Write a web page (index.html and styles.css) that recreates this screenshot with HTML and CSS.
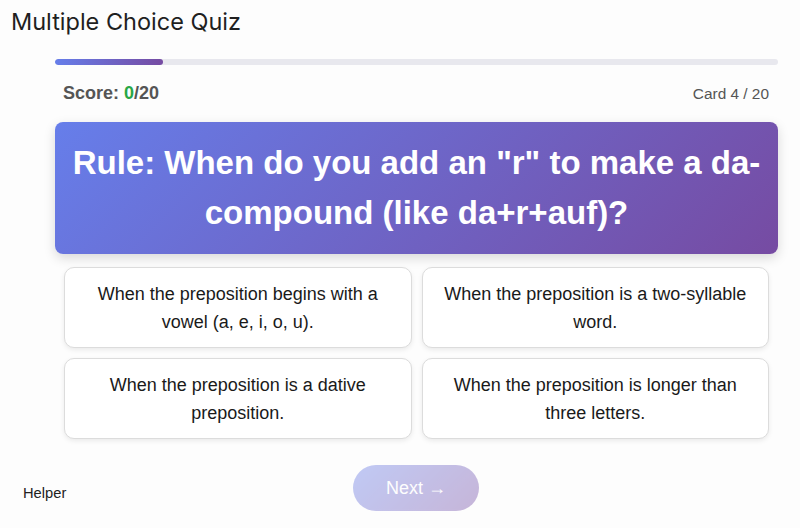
FILE: index.html
```html
<!DOCTYPE html>
<html>
<head>
<meta charset="utf-8">
<link rel="stylesheet" href="styles.css">
</head>
<body>
<h1 class="title">Multiple Choice Quiz</h1>
<main class="quiz">
  <div class="progress"><div class="progress-fill" style="width:15%"></div></div>
  <div class="stats">
    <span class="score">Score: <span class="score-num">0</span>/20</span>
    <span class="card-count">Card 4 / 20</span>
  </div>
  <div class="question">Rule: When do you add an "r" to make a da-compound (like da+r+auf)?</div>
  <div class="options">
    <button class="option">When the preposition begins with a vowel (a, e, i, o, u).</button>
    <button class="option">When the preposition is a two-syllable word.</button>
    <button class="option">When the preposition is a dative preposition.</button>
    <button class="option">When the preposition is longer than three letters.</button>
  </div>
</main>
<footer class="footer">
  <span class="helper">Helper</span>
  <button class="next" disabled>Next →</button>
</footer>
</body>
</html>
```

FILE: styles.css
```css
* { box-sizing: border-box; }
html, body { margin: 0; padding: 0; }
body {
  background: #fdfdfd;
  font-family: "Liberation Sans", Arial, sans-serif;
  color: #222;
  width: 800px;
  height: 528px;
  overflow: hidden;
}
.title {
  margin: 0;
  padding: 7px 0 0 11px;
  height: 44px;
  font-family: Inter, "Open Sans", sans-serif;
  font-weight: 400;
  font-size: 23.5px;
  line-height: 30px;
  color: #1f1f1f;
}
.quiz {
  margin-left: 55px;
  width: 723px;
  padding-top: 15px;
}
.progress {
  height: 6px;
  background: #e8e8ee;
  border-radius: 3px;
  overflow: hidden;
}
.progress-fill {
  height: 100%;
  background: linear-gradient(90deg, #667eea, #764ba2);
  border-radius: 3px;
}
.stats {
  display: flex;
  justify-content: space-between;
  align-items: center;
  padding: 0 9px 0 8px;
  height: 57px;
  color: #555;
}
.score { font-weight: bold; font-size: 18px; }
.score-num { color: #28a745; }
.card-count { font-size: 15.4px; }
.question {
  height: 132px;
  border-radius: 8px;
  background: linear-gradient(135deg, #667eea 0%, #764ba2 100%);
  box-shadow: 0 4px 12px rgba(0,0,0,0.15);
  color: #fff;
  font-weight: bold;
  font-size: 33px;
  line-height: 50px;
  text-align: center;
  display: flex;
  align-items: center;
  justify-content: center;
  padding: 0 12px;
}
.options {
  display: grid;
  grid-template-columns: 1fr 1fr;
  gap: 10px 10px;
  padding: 13px 9px 0 9px;
}
.option {
  height: 81px;
  background: #fff;
  border: 1px solid #dcdcdc;
  border-radius: 10px;
  box-shadow: 0 2px 5px rgba(0,0,0,0.08);
  font-family: "Liberation Sans", Arial, sans-serif;
  font-size: 18px;
  line-height: 28px;
  color: #1a1a1a;
  text-align: center;
  padding: 0 20px;
}
.footer {
  display: flex;
  align-items: center;
  height: 46px;
  margin-top: 26px;
  padding-left: 23px;
}
.helper {
  font-size: 14.7px;
  color: #222;
  margin-top: 10px;
  width: 330px;
}
.next {
  width: 126px;
  height: 46px;
  border: none;
  border-radius: 23px;
  background: linear-gradient(135deg, #667eea, #764ba2);
  opacity: 0.4;
  color: #fff;
  font-family: "Liberation Sans", Arial, sans-serif;
  font-size: 18px;
}
```
